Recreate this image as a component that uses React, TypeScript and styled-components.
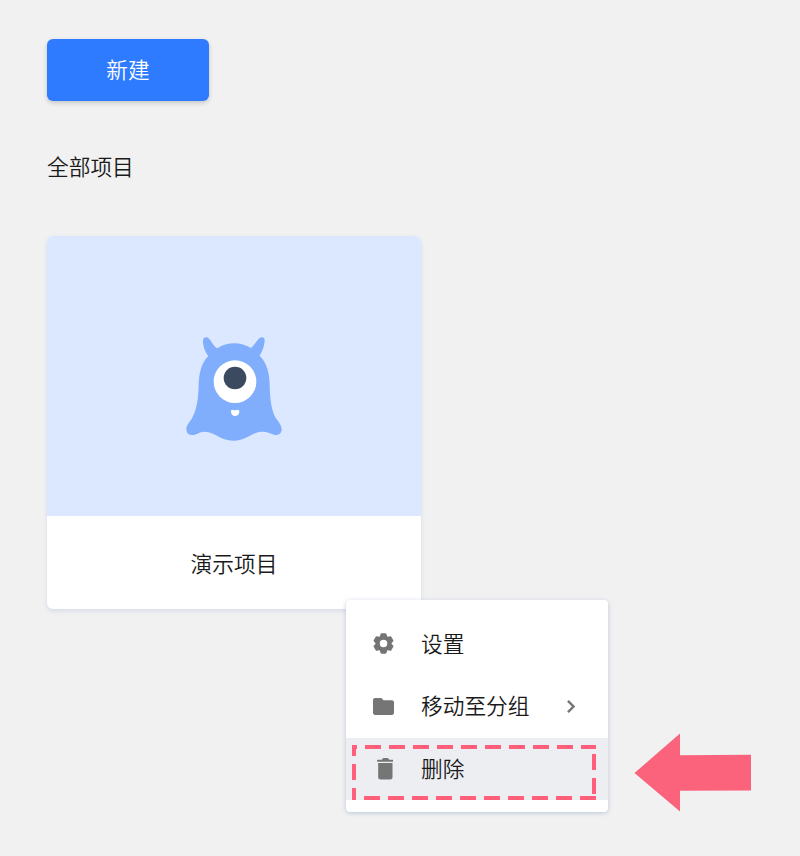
import React from "react";
import styled, { createGlobalStyle } from "styled-components";

const GlobalStyle = createGlobalStyle`
  body {
    margin: 0;
    background: #f1f1f1;
    font-family: "Noto Sans CJK SC", sans-serif;
    font-size: 21.7px;
    font-weight: 350;
    color: #1a1a1a;
  }
`;

const Page = styled.main`
  position: relative;
  box-sizing: border-box;
  width: 800px;
  height: 856px;
  padding: 39px 47px 0;
  overflow: hidden;
`;

const CreateButton = styled.button`
  display: block;
  width: 162px;
  height: 62px;
  padding: 0 0 2px;
  border: 0;
  border-radius: 6px;
  background: #2e7bff;
  color: #fff;
  font: inherit;
  line-height: 60px;
  box-shadow: 0 2px 5px rgba(0, 0, 0, 0.18);
`;

const SectionTitle = styled.h2`
  margin: 49px 0 0;
  font: inherit;
  line-height: 32px;
`;

const ProjectCard = styled.article`
  width: 374px;
  height: 373px;
  margin-top: 54px;
  border-radius: 6px;
  background: #fff;
  overflow: hidden;
  box-shadow: 0 2px 4px rgba(130, 160, 210, 0.26);
`;

const Cover = styled.div`
  height: 280px;
  background: #dce8ff;
`;

const Mascot = styled.svg`
  display: block;
  width: 120px;
  height: 125px;
  margin: 0 auto 0 127px;
  padding-top: 89px;
`;

const ProjectName = styled.div`
  line-height: 32px;
  padding-top: 31px;
  text-align: center;
`;

const Menu = styled.div`
  position: absolute;
  left: 346px;
  top: 600px;
  box-sizing: border-box;
  width: 262px;
  height: 212px;
  padding: 12.5px 0;
  border-radius: 4px;
  background: #fff;
  box-shadow: 0 1px 4px rgba(100, 135, 180, 0.4);
`;

const MenuItem = styled.div<{ $active?: boolean }>`
  display: grid;
  grid-template-columns: 75px 1fr 58px;
  align-items: center;
  height: 62.5px;
  background: ${({ $active }) => ($active ? "#edeef2" : "transparent")};
`;

const MenuLabel = styled.span`
  padding-bottom: 2px;
  line-height: 60px;
`;

const IconSlot = styled.span<{ $inset: number }>`
  display: flex;
  padding-left: ${({ $inset }) => $inset}px;
`;

const Glyph = styled.svg`
  display: block;
  fill: #757575;
`;

const ChevronSlot = styled.span`
  display: flex;
  padding-left: 17px;
`;

const Highlight = styled.svg`
  position: absolute;
  left: 352px;
  top: 745px;
  stroke: #ff5f7a;
  stroke-width: 4;
  stroke-dasharray: 16 8;
`;

const Arrow = styled.svg`
  position: absolute;
  left: 634px;
  top: 733px;
  fill: #fb637c;
`;

const toothAngles = [0, 60, 120, 180, 240, 300];

const SettingsIcon = () => (
  <Glyph width="21" height="21" viewBox="-31.5 -31.5 63 63">
    <circle r="17.5" fill="none" stroke="#757575" strokeWidth="12.5" />
    {toothAngles.map((angle) => (
      <path
        key={angle}
        transform={`rotate(${angle})`}
        d="M-12 -18L-9 -28Q-8.5 -30.5 -6 -30.5H6Q8.5 -30.5 9 -28L12 -18Z"
      />
    ))}
  </Glyph>
);

const FolderIcon = () => (
  <Glyph width="21" height="17" viewBox="2 4 20 16">
    <path d="M10 4H4c-1.1 0-1.99.9-1.99 2L2 18c0 1.1.9 2 2 2h16c1.1 0 2-.9 2-2V8c0-1.1-.9-2-2-2h-8l-2-2z" />
  </Glyph>
);

const DeleteIcon = () => (
  <Glyph width="16.7" height="21.7" viewBox="0 0 50 65">
    <path d="M2 5H14L17 1.5Q18 0 20 0H31Q33 0 34 1.5L37 5H48Q50 5 50 8T48 11H2Q0 11 0 8T2 5Z" />
    <path d="M3.5 15H46.5V57Q46.5 64.5 39 64.5H11Q3.5 64.5 3.5 57Z" />
  </Glyph>
);

const ChevronIcon = () => (
  <Glyph width="8.4" height="13" viewBox="8.4 5.8 7.8 12.4">
    <path d="M10 5.8L8.4 7.4 13 12l-4.6 4.6L10 18.2l6.2-6.2z" />
  </Glyph>
);

export default function App() {
  return (
    <>
      <GlobalStyle />
      <Page>
        <CreateButton type="button">新建</CreateButton>
        <SectionTitle>全部项目</SectionTitle>
        <ProjectCard>
          <Cover>
            <Mascot viewBox="0 0 360 375">
              <path
                fill="#80aefd"
                d="M103 93C92 80 86 58 87 46C88 36 98 33 105 41C113 49 118 63 130 70C160 50 200 50 231 69C240 62 248 48 256 40C264 33 273 37 272 48C271 62 266 78 257 92C278 112 287 145 287 180C288 225 293 262 308 283C316 294 323 302 323 313C323 325 313 332 303 330C290 326 282 320 263 320C235 320 220 347 178 347C138 347 122 320 93 320C75 320 68 330 56 330C44 331 37 324 37 312C38 298 48 291 54 280C68 255 73 222 74 180C75 150 80 115 103 93Z"
              />
              <circle cx="183" cy="170" r="64" fill="#fff" />
              <circle cx="183" cy="159" r="34" fill="#3c4a60" />
              <path
                fill="#fff"
                d="M175 254Q183 258 191 254Q197 254 196 261Q194 273 183 273Q172 272 171 260Q170 254 175 254Z"
              />
            </Mascot>
          </Cover>
          <ProjectName>演示项目</ProjectName>
        </ProjectCard>

        <Menu>
          <MenuItem>
            <IconSlot $inset={27}>
              <SettingsIcon />
            </IconSlot>
            <MenuLabel>设置</MenuLabel>
          </MenuItem>
          <MenuItem>
            <IconSlot $inset={27}>
              <FolderIcon />
            </IconSlot>
            <MenuLabel>移动至分组</MenuLabel>
            <ChevronSlot>
              <ChevronIcon />
            </ChevronSlot>
          </MenuItem>
          <MenuItem $active>
            <IconSlot $inset={30.8}>
              <DeleteIcon />
            </IconSlot>
            <MenuLabel>删除</MenuLabel>
          </MenuItem>
        </Menu>

        <Highlight width="244" height="55" viewBox="0 0 244 55">
          <path d="M0 2H244" strokeDashoffset="11" />
          <path d="M242 9V49" />
          <path d="M0 53H244" strokeDashoffset="12" />
          <path d="M2 0V55" strokeDashoffset="5" />
        </Highlight>

        <Arrow width="118" height="79" viewBox="0 0 118 79">
          <path d="M0.5 40L46 0.5V22.3L117 21.8V57.5L46 57.8V78.5Z" />
        </Arrow>
      </Page>
    </>
  );
}
